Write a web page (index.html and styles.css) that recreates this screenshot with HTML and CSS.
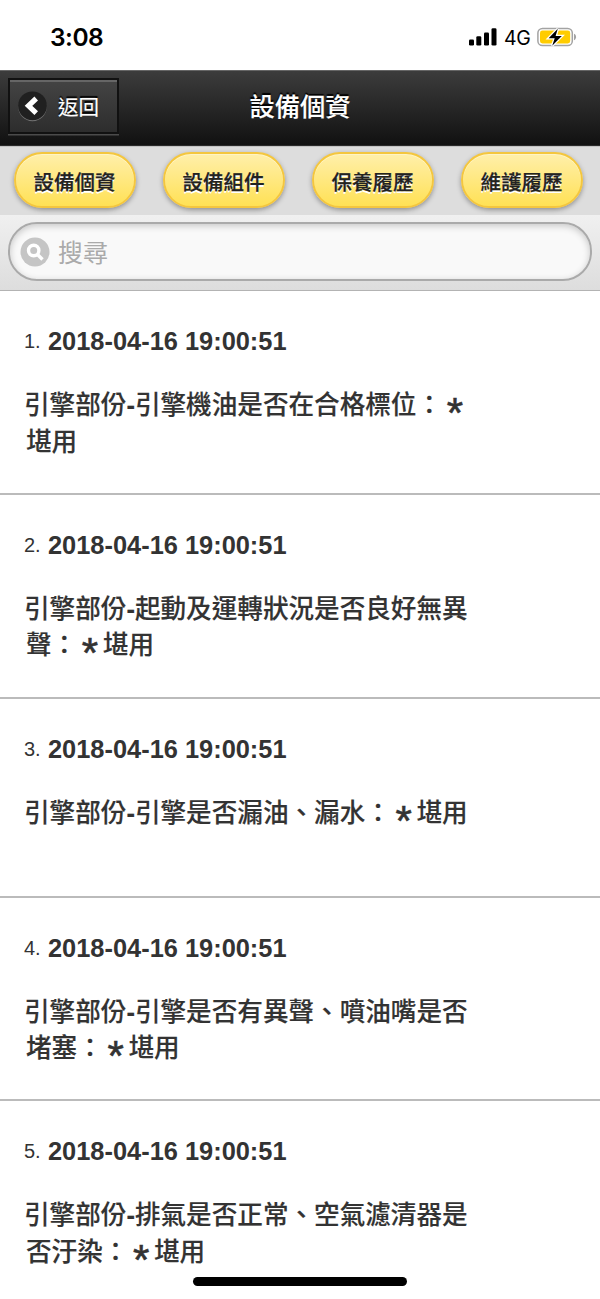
FILE: index.html
```html
<!DOCTYPE html>
<html lang="zh-Hant">
<head>
<meta charset="utf-8">
<title>設備個資</title>
<link rel="stylesheet" href="styles.css">
</head>
<body>
<div class="status">
  <span class="clock">3:08</span>
  <div class="indicators">
    <svg class="signal" width="28" height="18" viewBox="0 0 28 18"><rect x="0" y="11.5" width="5" height="6" rx="1.3"/><rect x="7.3" y="8.3" width="5" height="9.2" rx="1.3"/><rect x="15" y="4.5" width="5" height="13" rx="1.3"/><rect x="22.5" y="0.3" width="5" height="17.2" rx="1.3"/></svg>
    <span class="network">4G</span>
    <svg class="battery" width="40" height="20" viewBox="0 0 40 20"><rect x=".9" y="1.4" width="34.4" height="17.2" rx="4.6" fill="none" stroke="#a3a3a3" stroke-width="1.5"/><rect x="3" y="3.5" width="30.2" height="13" rx="2.4" fill="#fc0"/><path d="M37 6.8c2.8 1 2.8 5.4 0 6.4z" fill="#a3a3a3"/><path d="M20.8 1.8 11.6 11.3h6.1l-2.5 7.4 9.6-9.6h-6.2z" fill="#000" stroke="#fff" stroke-width="2.6" paint-order="stroke"/></svg>
  </div>
</div>
<header class="header">
  <a class="back"><svg width="29" height="31" viewBox="0 0 29 31"><circle cx="14.5" cy="16" r="14.2" fill="#777"/><circle cx="14.5" cy="14.8" r="14.4" fill="#202020"/><path d="M18.2 7.5 10.5 14.8 18.2 22.1" fill="none" stroke="#fff" stroke-width="5.2"/></svg><span>返回</span></a>
  <h1 class="title">設備個資</h1>
</header>
<nav class="tabs">
  <a class="tab">設備個資</a><a class="tab">設備組件</a><a class="tab">保養履歷</a><a class="tab">維護履歷</a>
</nav>
<div class="search">
  <div class="field"><svg width="30" height="30" viewBox="0 0 30 30"><circle cx="15" cy="15" r="14.5" fill="#c5c5c5"/><circle cx="13.7" cy="13.5" r="5.2" fill="none" stroke="#fff" stroke-width="3.4"/><path d="m17.5 17.5 5 5" stroke="#fff" stroke-width="3.4"/></svg><span class="hint">搜尋</span></div>
</div>
<main class="list">
  <section class="item"><div class="date"><span class="num">1.</span>2018-04-16 19:00:51</div><p class="desc">引擎部份<b>-</b>引擎機油是否在合格標位：<span class="star">*</span><span class="next">堪用</span></p></section>
  <section class="item"><div class="date"><span class="num">2.</span>2018-04-16 19:00:51</div><p class="desc">引擎部份<b>-</b>起動及運轉狀況是否良好無異<span class="next">聲：<span class="star">*</span>堪用</span></p></section>
  <section class="item short"><div class="date"><span class="num">3.</span>2018-04-16 19:00:51</div><p class="desc">引擎部份<b>-</b>引擎是否漏油、漏水：<span class="star">*</span>堪用</p></section>
  <section class="item"><div class="date"><span class="num">4.</span>2018-04-16 19:00:51</div><p class="desc">引擎部份<b>-</b>引擎是否有異聲、噴油嘴是否<span class="next">堵塞：<span class="star">*</span>堪用</span></p></section>
  <section class="item"><div class="date"><span class="num">5.</span>2018-04-16 19:00:51</div><p class="desc">引擎部份<b>-</b>排氣是否正常、空氣濾清器是<span class="next">否汙染：<span class="star">*</span>堪用</span></p></section>
</main>
<div class="home"></div>
</body>
</html>
```
FILE: styles.css
```css
* { box-sizing: border-box; }
body { margin: 0; width: 600px; height: 1299px; overflow: hidden; background: #fff; color: #333; font-family: "Liberation Sans", "Noto Sans CJK TC", sans-serif; }
.status { height: 70px; display: flex; justify-content: space-between; padding: 24px 23px 0 50px; color: #000; }
.clock { font: 600 24.5px/27px Inter, sans-serif; letter-spacing: -.5px; }
.indicators { display: flex; align-items: flex-start; padding-top: 4px; }
.network { font: 400 19.5px/20px Inter, sans-serif; width: 33px; margin-left: 7px; letter-spacing: -.4px; }
.battery { margin-top: -1px; }
.header { height: 76px; display: grid; grid-template-columns: 1fr auto 1fr; align-items: start; padding: 6px 8px 0; background: linear-gradient(#3c3c3c, #111); border-top: 1px solid #666; border-bottom: 1px solid #2a2a2a; color: #fff; text-shadow: 0 -2px 1px #000; }
.back { width: 111px; height: 56px; margin-top: 1px; display: flex; align-items: center; gap: 11px; padding: 0 0 0 8px; border: 2px solid #111; background: linear-gradient(#444, #2d2d2d); box-shadow: inset 0 2px 0 #666, 0 1.5px 0 #4b4b4b; font-size: 20.5px; -webkit-text-stroke: .2px; }
.title { margin: 0; font-size: 25.3px; line-height: 60px; font-weight: 500; -webkit-text-stroke: .15px; }
.tabs { height: 69px; display: flex; gap: 27px; padding: 5px 14px 0; background: #ddd; border-top: 1px solid #c3c3c3; }
.tab { width: 122px; height: 56px; flex: none; border: 2px solid #f4c63e; border-radius: 28px; background: linear-gradient(#ffefaa, #ffe155); color: #222; font-size: 20.5px; line-height: 57px; font-weight: 500; text-align: center; text-indent: -1px; text-shadow: 0 2px 0 #fff; -webkit-text-stroke: .25px; box-shadow: 0 2px 5px rgba(0,0,0,.35), inset 0 1px 0 #fff4c5; }
.search { height: 76px; padding: 7px 8px; background: linear-gradient(#f0f0f0, #ddd); border-bottom: 1px solid #b3b3b3; }
.field { height: 59px; display: flex; align-items: center; gap: 8px; padding-left: 10px; border: 2px solid #aaa; border-radius: 29px; background: #f9f9f9; box-shadow: inset 0 2px 7px rgba(0,0,0,.2); color: #aaa; font-size: 25px; }
.hint { padding-bottom: 2px; }
.item { height: 203.75px; padding: 35px 0 0 24px; border-bottom: 2px solid #bbb; }
.item.short { height: 199px; }
.date { height: 30px; display: flex; align-items: center; font-size: 25.4px; font-weight: 700; line-height: 30px; }
.num { width: 24px; font-size: 20px; font-weight: 400; }
.desc { margin: 31px 0 0; font-size: 25.6px; line-height: 36.5px; font-weight: 500; white-space: nowrap; -webkit-text-stroke: .15px; }
.next { display: block; padding-left: 2px; }
.star { display: inline-block; width: 25.6px; height: 20px; font-size: 42px; font-weight: 400; line-height: 20px; text-align: center; vertical-align: -13px; margin: -20px 0; -webkit-text-stroke: .6px; }
.home { position: absolute; left: 193px; top: 1277px; width: 214px; height: 9px; border-radius: 5px; background: #000; }
```
